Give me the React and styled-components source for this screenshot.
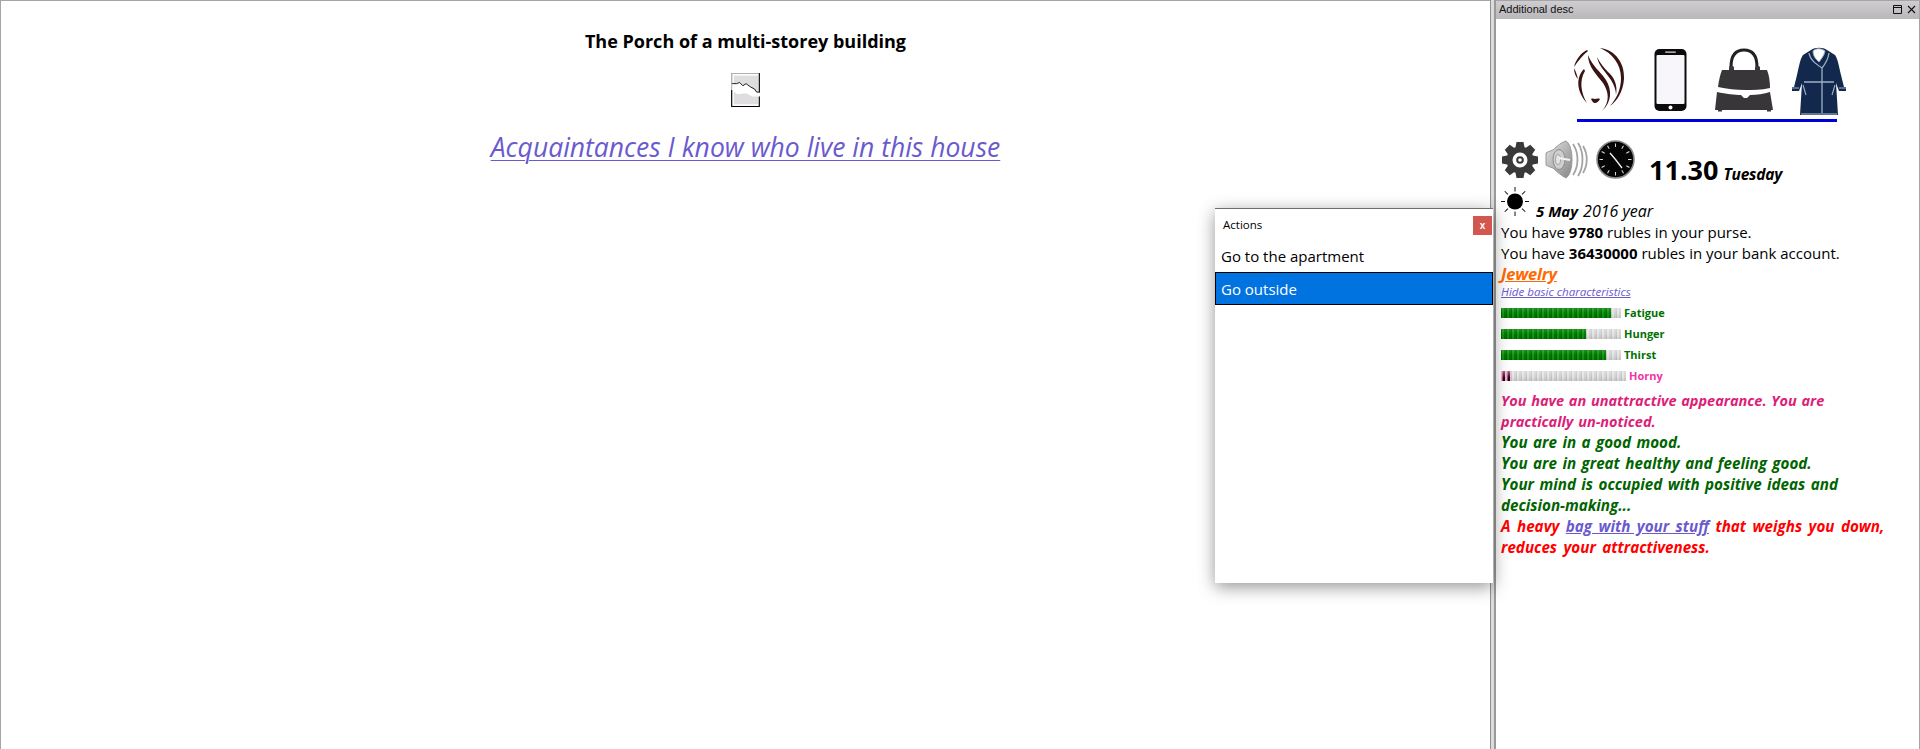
import React from "react";
import styled, { createGlobalStyle } from "styled-components";

const Global = createGlobalStyle`
  html, body { margin: 0; padding: 0; height: 100%; background: #fff; overflow: hidden; }
  #root { height: 100%; }
  body { font-family: "Open Sans", "Noto Sans", sans-serif; color: #000; }
`;

const Page = styled.div`
  position: relative;
  display: flex;
  width: 1920px;
  height: 749px;
  background: #fff;
  overflow: hidden;
`;

const MainPane = styled.main`
  width: 1490px;
  flex: none;
  box-sizing: border-box;
  border-top: 1px solid #a5a5a5;
  border-left: 1px solid #a5a5a5;
  display: flex;
  flex-direction: column;
  align-items: center;
`;

const Heading = styled.h1`
  margin: 28px 0 0;
  font-size: 18px;
  line-height: 24px;
  font-weight: 700;
`;

const BrokenImage = styled.svg`
  display: block;
  margin-top: 20px;
`;

const BigLink = styled.a`
  margin-top: 22px;
  font-size: 26.5px;
  line-height: 36px;
  font-style: italic;
  color: #6a5acd;
  text-decoration: underline;
  text-decoration-thickness: 1px;
  text-underline-offset: 3px;
`;

const Splitter = styled.div`
  width: 6px;
  flex: none;
  box-sizing: border-box;
  border-left: 1px solid #8f8f8f;
  border-right: 2px solid #9a9a9a;
  background: #dcdcdc;
`;

const SidePane = styled.aside`
  flex: 1;
  box-sizing: border-box;
  border-top: 1px solid #a5a5a5;
  border-right: 1px solid #a5a5a5;
  display: flex;
  flex-direction: column;
  min-width: 0;
`;

const TitleBar = styled.header`
  height: 18px;
  flex: none;
  display: flex;
  align-items: center;
  justify-content: space-between;
  padding: 0 3px 2px 3px;
  box-sizing: border-box;
  background: linear-gradient(#cfcdcf, #b9b7b9);
  font-family: "Liberation Sans", sans-serif;
  font-size: 11px;
  color: #111;
`;

const TitleButtons = styled.div`
  display: flex;
  gap: 5px;
  align-items: center;
`;

const SideBody = styled.div`
  padding: 28px 0 0 5px;
  font-size: 15px;
  line-height: 21px;
`;

const Inventory = styled.div`
  display: flex;
  align-items: flex-start;
  width: 274px;
  margin-left: 72px;
`;

const Slot = styled.div`
  flex: none;
  height: 68px;
  width: ${(p) => p.$w}px;
  margin-left: ${(p) => p.$gap}px;
  filter: blur(0.35px);
  svg { display: block; }
`;

const Rule = styled.div`
  width: 260px;
  height: 3px;
  margin: 4px 0 0 76px;
  background: #0000d8;
`;

const ClockRow = styled.div`
  display: flex;
  align-items: flex-start;
  margin-top: 19px;
  height: 41px;
`;

const ClockIcon = styled.svg`
  display: block;
  flex: none;
  margin-right: ${(p) => p.$mr}px;
  margin-top: ${(p) => p.$mt || 0}px;
`;

const Time = styled.span`
  font-size: 27px;
  line-height: 44px;
  font-weight: 700;
  margin: 7px 0 0 14px;
  white-space: nowrap;
`;

const Day = styled.span`
  font-size: 15.5px;
  font-weight: 700;
  font-style: italic;
  margin-left: 5px;
  letter-spacing: -0.2px;
`;

const DateRow = styled.div`
  display: flex;
  align-items: flex-end;
  margin-top: 6px;
  height: 34px;
  font-size: 16px;
  font-style: italic;
  line-height: 22px;
`;

const SunIcon = styled.svg`
  display: block;
  flex: none;
  margin: 0 7px 6px 0;
`;

const DateBold = styled.b`
  font-size: 15px;
  margin-right: 5px;
`;

const TextLine = styled.div`
  white-space: nowrap;
  b { font-weight: 700; }
`;

const JewelryLink = styled.a`
  display: block;
  width: fit-content;
  font-weight: 700;
  font-style: italic;
  font-size: 16.5px;
  line-height: 19px;
  color: #ff6a00;
  text-decoration: underline;
  letter-spacing: -0.2px;
`;

const HideLink = styled.a`
  display: block;
  width: fit-content;
  margin-top: 1px;
  font-style: italic;
  font-size: 11.6px;
  line-height: 16px;
  color: #6a5acd;
  text-decoration: underline;
`;

const Meters = styled.div`
  margin-top: 2px;
`;

const Meter = styled.div`
  display: flex;
  align-items: center;
  height: 21px;
  font-size: 11px;
  font-weight: 700;
  color: ${(p) => p.$color};
`;

const MeterTrack = styled.div`
  width: ${(p) => p.$w}px;
  height: 10px;
  flex: none;
  margin-right: 3px;
  background:
    linear-gradient(rgba(255, 255, 255, 0.28), rgba(255, 255, 255, 0) 55%, rgba(0, 0, 0, 0.08)),
    repeating-linear-gradient(90deg, #c6c6c6 0 1px, #e4e4e4 1px 3px, #d2d2d2 3px 5px);
`;

const MeterFill = styled.div`
  height: 100%;
  background: ${(p) =>
    p.$pink
      ? "linear-gradient(rgba(255,200,225,0.55), rgba(60,0,30,0) 70%), repeating-linear-gradient(90deg, #f0a8c8 0 1px, #a84a78 1px 2px, #2c0016 2px 4px, #e8bcd0 4px 5px)"
      : "linear-gradient(rgba(255,255,255,0.14), rgba(0,0,0,0) 50%, rgba(0,0,0,0.12)), repeating-linear-gradient(90deg, #006a00 0 1px, #149a14 1px 3px, #007c00 3px 5px)"};
`;

const Status = styled.div`
  width: 390px;
  margin-top: ${(p) => p.$mt || 0}px;
  font-size: ${(p) => p.$size || 15.2}px;
  font-weight: 700;
  font-style: italic;
  word-spacing: ${(p) => p.$ws ?? 1.5}px;
  color: ${(p) => p.$color};
`;

const InlineLink = styled.a`
  color: #6a5acd;
  text-decoration: underline;
`;

const Dialog = styled.section`
  position: absolute;
  left: 1215px;
  top: 208px;
  width: 278px;
  height: 375px;
  background: #fff;
  border-top: 1px solid #6e6e6e;
  box-sizing: border-box;
  box-shadow: 0 4px 16px rgba(0, 0, 0, 0.42);
`;

const DialogHead = styled.div`
  height: 30px;
  display: flex;
  align-items: center;
  justify-content: space-between;
  padding: 4px 1px 1px 8px;
  box-sizing: border-box;
  font-size: 11.5px;
`;

const DialogTitle = styled.span`
  margin-bottom: 2px;
`;

const CloseButton = styled.button`
  width: 19px;
  height: 19px;
  padding: 0;
  border: 0;
  background: #d2574f;
  color: #fff;
  font: 700 10px "Liberation Sans", sans-serif;
`;

const Action = styled.div`
  box-sizing: border-box;
  height: 33px;
  display: flex;
  align-items: center;
  font-size: 15px;
  color: ${(p) => (p.$active ? "#fff" : "#000")};
  background: ${(p) => (p.$active ? "#0073e0" : "transparent")};
  border: ${(p) => (p.$active ? "1px solid #000" : "0")};
  padding-left: ${(p) => (p.$active ? 5 : 6)}px;
`;

const Hair = () => (
  <svg width="52" height="68" viewBox="0 0 52 68" fill="#3a1414">
    <path d="M27 1C43 3 52 17 51 32 50 45 44 54 37 59 44 51 48 42 48 31 48 17 39 6 27 1Z" />
    <path d="M14 3C8 6 3 12 1 20 5 14 10 8 15 4Z" />
    <path d="M1 21C1 26 3 30 5 32 4 28 3 25 1 21Z" />
    <path d="M15 8C15 20 24 28 30 36 36 45 37 55 29 64 39 55 39 43 33 33 27 24 20 20 15 8Z" />
    <path d="M24 10C26 20 33 25 38 33 41 38 43 43 43 48 45 38 41 30 35 25 31 21 27 16 24 10Z" />
    <path d="M11 22C3 30 3 44 14 56 8 46 6 34 12 24Z" />
    <path d="M18 52C20 51 21 52 22 52 23 52 25 51 27 52 26 54 24 56 22 56 20 56 19 54 18 52Z" />
  </svg>
);

const Phone = () => (
  <svg width="33" height="68" viewBox="0 0 33 68">
    <rect x="0.5" y="2" width="32" height="62" rx="5" fill="#0c0c0c" />
    <rect x="2.5" y="8" width="28" height="49" rx="1" fill="#f8f5fb" />
    <rect x="11" y="4.4" width="11" height="1.4" rx="0.7" fill="#ddd" />
    <circle cx="16.5" cy="60.5" r="2" fill="#fff" />
  </svg>
);

const Bag = () => (
  <svg width="60" height="68" viewBox="0 0 60 68" fill="#383638">
    <path d="M16 20C16 8 21 3 29 3 37 3 42 8 42 20" fill="none" stroke="#222" strokeWidth="3" />
    <rect x="14" y="19" width="5" height="5" rx="1.5" />
    <rect x="40" y="19" width="5" height="5" rx="1.5" />
    <path d="M7 23H52C54 28 55 34 55 41 46 43 38 43 30 43 21 43 12 42 3 40 4 33 5 28 7 23Z" />
    <path d="M2 45C11 47 20 48 26 48L29 51 32 51 35 48C42 48 49 47 55 45L58 63H56V64.5H52V63H7V64.5H3V63H0Z" />
  </svg>
);

const Coat = () => (
  <svg width="56" height="68" viewBox="0 0 56 68">
    <path d="M20 3C24 0 32 0 36 3L44 8C47 12 48 20 50 28L53 40H55V44H48L45 36 47 68H9L11 36 8 44H1V40H3L6 28C8 20 9 12 12 8Z" fill="#12284c" />
    <path d="M22 4C22 10 26 13 28 15 30 12 33 9 34 4 30 1 25 1 22 4Z" fill="#fff" stroke="#9fb0c6" strokeWidth="1" />
    <path d="M18 6C19 13 25 17 31 21V66M38 6C37 13 35 16 31 21M13 35H43" fill="none" stroke="#9fb0c6" strokeWidth="1.3" />
    <path d="M10 67H46" stroke="#7f90a8" strokeWidth="1.4" />
    <path d="M12 38L15 48M41 48L44 38" stroke="#9fb0c6" strokeWidth="1.1" />
    <path d="M1 41H8M48 41H55" stroke="#9fb0c6" strokeWidth="1" />
  </svg>
);

const Gear = () => (
  <ClockIcon $mr={6} width="38" height="38" viewBox="0 0 38 36" fill="#3a3a3a">
    {[0, 45, 90, 135, 180, 225, 270, 315].map((a) => (
      <path key={a} d="M15.5 0H22.5L24 8H14Z" transform={`rotate(${a} 19 18)`} />
    ))}
    <circle cx="19" cy="18" r="10.5" fill="none" stroke="#3a3a3a" strokeWidth="6" />
    <circle cx="19" cy="18" r="2.8" fill="none" stroke="#3a3a3a" strokeWidth="2" />
  </ClockIcon>
);

const Speaker = () => (
  <ClockIcon $mr={7} width="44" height="39" viewBox="0 0 44 39" $mt={-1}>
    <defs>
      <linearGradient id="cone" x1="0" x2="1" y1="0" y2="1">
        <stop offset="0" stopColor="#e4e4e4" />
        <stop offset="1" stopColor="#858585" />
      </linearGradient>
    </defs>
    <path d="M1 13C2 12 5 11 8 10 12 6 17 2 21 1 29 6 29 33 21 38 17 36 12 32 8 28 5 27 2 26 1 25Z" fill="url(#cone)" stroke="#979797" />
    <ellipse cx="14" cy="19.5" rx="6" ry="10" fill="#cfcfcf" stroke="#8c8c8c" />
    <ellipse cx="13" cy="19.5" rx="2.5" ry="5" fill="#e4e4e4" stroke="#a0a0a0" />
    <path d="M14 18L25 20" stroke="#f4f4f4" strokeWidth="2.2" />
    <path d="M28 4C34 13 34 26 28 35M33 3C39 12 39 27 33 36M38 6C43 14 43 25 38 33" fill="none" stroke="#a4a4a4" strokeWidth="1.8" />
  </ClockIcon>
);

const Clock = () => (
  <ClockIcon $mr={0} $mt={-1} width="39" height="39" viewBox="0 0 39 39">
    <circle cx="19.5" cy="19.5" r="18.5" fill="#050505" stroke="#8a8a8a" strokeWidth="1.6" />
    {[0, 30, 60, 90, 120, 150, 180, 210, 240, 270, 300, 330].map((a) => (
      <path key={a} d="M19.5 3.5V7" stroke="#d8d8d8" strokeWidth="1" transform={`rotate(${a} 19.5 19.5)`} />
    ))}
    <path d="M19.5 19.5L14 13M19.5 19.5L26 28" stroke="#f2f2f2" strokeWidth="1.3" />
  </ClockIcon>
);

const Sun = () => (
  <SunIcon width="28" height="29" viewBox="0 0 28 29">
    <circle cx="14" cy="14.5" r="8" fill="#000" />
    {[0, 45, 90, 135, 180, 225, 270, 315].map((a) => (
      <path key={a} d="M14 0V4.5" stroke="#111" strokeWidth="1" transform={`rotate(${a} 14 14.5)`} />
    ))}
  </SunIcon>
);

const meters = [
  { name: "Fatigue", fill: 110, w: 120, color: "#007000" },
  { name: "Hunger", fill: 85, w: 120, color: "#007000" },
  { name: "Thirst", fill: 105, w: 120, color: "#007000" },
  { name: "Horny", fill: 10, w: 125, color: "#f032a8", pink: true },
];

export default function App() {
  return (
    <Page>
      <Global />
      <MainPane>
        <Heading>The Porch of a multi-storey building</Heading>
        <BrokenImage width="29" height="34" viewBox="0 0 27 32">
          <rect x="0.5" y="0.5" width="26" height="31" fill="#fff" stroke="#b0b0b0" />
          <rect x="2.5" y="2.5" width="23" height="27" fill="#dfdde0" />
          <path d="M0 16L6 20 14 19 20 22 27 22V18L24 18 18 13 14 10 11 12 8 9 5 10 0 10Z" fill="#fff" />
          <path d="M0 10L5 10 8 9 11 12 14 10 18 13 22 15 24 18 27 18" fill="none" stroke="#000" strokeWidth="0.8" />
          <path d="M26.5 0V18M26.5 22V31.5H0.5V16" fill="none" stroke="#000" strokeWidth="1" />
          <path d="M0.5 16V0.5H26" fill="none" stroke="#b0b0b0" strokeWidth="1" />
        </BrokenImage>
        <BigLink href="#">Acquaintances I know who live in this house</BigLink>
      </MainPane>
      <Splitter />
      <SidePane>
        <TitleBar>
          <span>Additional desc</span>
          <TitleButtons>
            <svg width="9" height="9" viewBox="0 0 9 9" fill="none" stroke="#111">
              <path d="M0.5 0.5H8.5V8.5H0.5ZM0.5 2.5H8.5" />
            </svg>
            <svg width="9" height="9" viewBox="0 0 9 9" fill="none" stroke="#111" strokeWidth="1.1">
              <path d="M1 1L8 8M8 1L1 8" />
            </svg>
          </TitleButtons>
        </TitleBar>
        <SideBody>
          <Inventory>
            <Slot $w={52} $gap={0}><Hair /></Slot>
            <Slot $w={33} $gap={29}><Phone /></Slot>
            <Slot $w={60} $gap={28}><Bag /></Slot>
            <Slot $w={56} $gap={16}><Coat /></Slot>
          </Inventory>
          <Rule />
          <ClockRow>
            <Gear />
            <Speaker />
            <Clock />
            <Time>
              11.30<Day>Tuesday</Day>
            </Time>
          </ClockRow>
          <DateRow>
            <Sun />
            <span><DateBold>5 May</DateBold>2016 year</span>
          </DateRow>
          <TextLine>You have <b>9780</b> rubles in your purse.</TextLine>
          <TextLine>You have <b>36430000</b> rubles in your bank account.</TextLine>
          <JewelryLink href="#">Jewelry</JewelryLink>
          <HideLink href="#">Hide basic characteristics</HideLink>
          <Meters>
            {meters.map((m) => (
              <Meter key={m.name} $color={m.color}>
                <MeterTrack $w={m.w}>
                  <MeterFill $pink={m.pink} style={{ width: m.fill }} />
                </MeterTrack>
                {m.name}
              </Meter>
            ))}
          </Meters>
          <Status $mt={4} $size={14.5} $ws={1} $color="#dc1e78">You have an unattractive appearance. You are practically un-noticed.</Status>
          <Status $color="#006400">You are in a good mood.</Status>
          <Status $color="#006400">You are in great healthy and feeling good.</Status>
          <Status $color="#006400">Your mind is occupied with positive ideas and decision-making...</Status>
          <Status $ws={2.5} $color="#ff0000">
            A heavy <InlineLink href="#">bag with your stuff</InlineLink> that weighs you down, reduces your attractiveness.
          </Status>
        </SideBody>
      </SidePane>
      <Dialog>
        <DialogHead>
          <DialogTitle>Actions</DialogTitle>
          <CloseButton>x</CloseButton>
        </DialogHead>
        <Action>Go to the apartment</Action>
        <Action $active>Go outside</Action>
      </Dialog>
    </Page>
  );
}
